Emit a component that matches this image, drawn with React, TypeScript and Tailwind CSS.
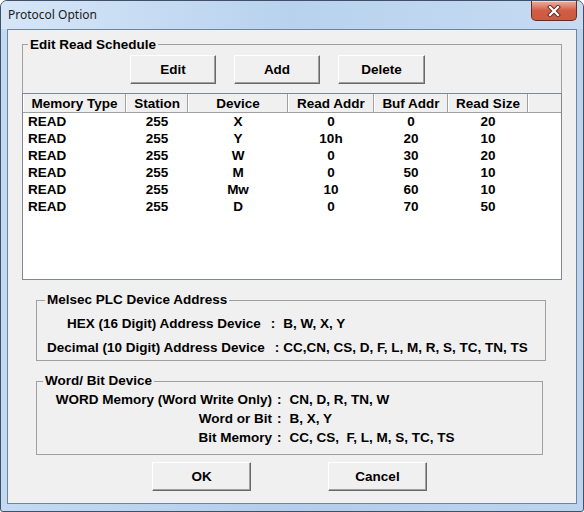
import React from "react";

const rows = [
  ["READ", "255", "X", "0", "0", "20"],
  ["READ", "255", "Y", "10h", "20", "10"],
  ["READ", "255", "W", "0", "30", "20"],
  ["READ", "255", "M", "0", "50", "10"],
  ["READ", "255", "Mw", "10", "60", "10"],
  ["READ", "255", "D", "0", "70", "50"],
];

const columns = [
  { title: "Memory Type", w: "w-[103px]" },
  { title: "Station", w: "w-[62px]" },
  { title: "Device", w: "w-[100px]" },
  { title: "Read Addr", w: "w-[86px]" },
  { title: "Buf Addr", w: "w-[74px]" },
  { title: "Read Size", w: "w-[80px]" },
];

const font = { fontFamily: '"Liberation Sans", Arial, sans-serif' };

function Button({ label, w }: { label: string; w: string }) {
  return (
    <button
      className={`${w} h-[29px] bg-[#f0f0f0] border border-t-white border-l-white border-r-[#696969] border-b-[#696969] shadow-[inset_-1px_-1px_0_#a0a0a0] text-black leading-none`}
    >
      {label}
    </button>
  );
}

function CloseButton() {
  return (
    <div className="w-[46px] h-[20px] rounded-b-[5px] border border-t-0 border-[#6b2a20] bg-gradient-to-b from-[#eab0a3] via-[#d15d44] to-[#cc5a3f] flex items-center justify-center shadow-[inset_0_1px_0_rgba(255,255,255,0.5)]">
      <svg width="14" height="12" viewBox="0 0 14 12">
        <path d="M3 2 L11 10 M11 2 L3 10" stroke="#5a2a24" strokeWidth="4" strokeLinecap="square" />
        <path d="M3 2 L11 10 M11 2 L3 10" stroke="#ffffff" strokeWidth="2.2" strokeLinecap="square" />
      </svg>
    </div>
  );
}

export default function App() {
  return (
    <div
      className="w-[584px] h-[512px] flex flex-col border border-[#3f5068] rounded-t-[7px] rounded-b-[3px] overflow-hidden bg-gradient-to-r from-[#c4daf2] via-[#b3cdea] to-[#bcd4ee]"
      style={font}
    >
      {/* title bar */}
      <div className="h-[28px] flex items-start justify-between pl-[7px] pr-[6px] bg-gradient-to-r from-[#d6e6f7] via-[#b8d2ee] to-[#c6dbf2]">
        <span
          className="mt-[5px] text-[12px] text-[#1b1b1b]"
          style={{ fontFamily: '"Noto Sans", sans-serif' }}
        >
          Protocol Option
        </span>
        <CloseButton />
      </div>

      {/* client area */}
      <div className="mx-[6px] mb-[7px] flex-1 border border-[#6f84a0] bg-[#f0f0f0] px-[14px] pt-[6px] text-[13.5px] font-bold text-black">
        <fieldset className="border border-b-0 border-[#a0a0a0]">
          <legend className="ml-[5px] px-[2px] leading-[17px]">Edit Read Schedule</legend>
          <div className="mt-[2px] flex gap-[18px] pl-[107px]">
            <Button label="Edit" w="w-[86px]" />
            <Button label="Add" w="w-[86px]" />
            <Button label="Delete" w="w-[87px]" />
          </div>
          <div className="-mx-px mt-[9px] h-[187px] border border-[#828790] bg-white">
            <div className="flex h-[19px] bg-[#f0f0f0] border-b border-[#a0a0a0]">
              {columns.map((c) => (
                <div
                  key={c.title}
                  className={`${c.w} border-l border-l-white border-r border-r-[#a0a0a0] flex items-center justify-center pt-[1px] leading-none`}
                >
                  {c.title}
                </div>
              ))}
              <div className="flex-1 border-l border-l-white" />
            </div>
            {rows.map((r, i) => (
              <div key={i} className="flex h-[17px] leading-[17px]">
                {r.map((v, j) => (
                  <div
                    key={j}
                    className={`${columns[j].w} ${j === 0 ? "pl-[5px] text-left" : "text-center"}`}
                  >
                    {v}
                  </div>
                ))}
              </div>
            ))}
          </div>
        </fieldset>

        <fieldset className="mt-[12px] ml-[14px] w-[510px] border border-[#a0a0a0] pt-[4px]">
          <legend className="ml-[8px] px-[2px] leading-[16px]">Melsec PLC Device Address</legend>
          <div className="flex h-[24px] items-center pl-[30px]">
            <span>HEX (16 Digit) Address Device</span>
            <span className="ml-[10px]">:</span>
            <span className="ml-[8px]">B, W, X, Y</span>
          </div>
          <div className="flex h-[24px] items-center pl-[10px]">
            <span>Decimal (10 Digit) Address Device</span>
            <span className="ml-[10px]">:</span>
            <span className="ml-[4px]">CC,CN, CS, D, F, L, M, R, S, TC, TN, TS</span>
          </div>
        </fieldset>

        <fieldset className="mt-[12px] ml-[14px] w-[507px] border border-[#a0a0a0] pt-[2px] pb-[6px]">
          <legend className="ml-[6px] px-[2px] leading-[16px]">Word/ Bit Device</legend>
          {[
            ["WORD Memory (Word Write Only)", "CN, D, R, TN, W"],
            ["Word or Bit", "B, X, Y"],
            ["Bit Memory", "CC, CS,  F, L, M, S, TC, TS"],
          ].map(([label, value]) => (
            <div key={label} className="flex h-[19px] items-center">
              <span className="w-[235px] text-right">{label}</span>
              <span className="ml-[5px]">:</span>
              <span className="ml-[8px] whitespace-pre">{value}</span>
            </div>
          ))}
        </fieldset>

        <div className="mt-[7px] flex gap-[77px] pl-[130px]">
          <Button label="OK" w="w-[99px] h-[28px]" />
          <Button label="Cancel" w="w-[99px] h-[28px]" />
        </div>
      </div>
    </div>
  );
}
